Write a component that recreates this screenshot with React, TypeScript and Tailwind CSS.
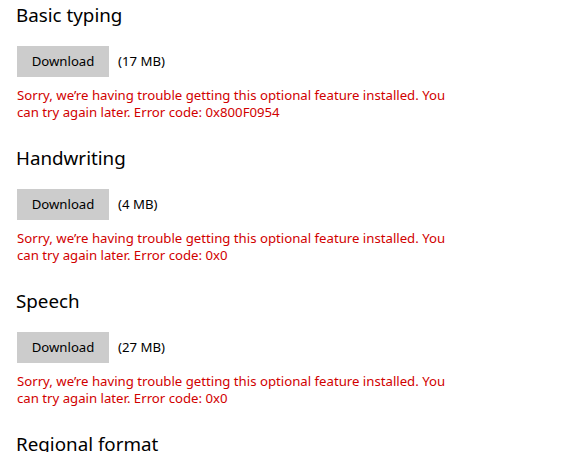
const sections = [
  { title: "Basic typing", size: "(17 MB)", code: "0x800F0954" },
  { title: "Handwriting", size: "(4 MB)", code: "0x0" },
  { title: "Speech", size: "(27 MB)", code: "0x0" },
];

export default function App() {
  return (
    <div className="h-[452px] w-[566px] overflow-hidden bg-white pl-4 font-['Noto_Sans',sans-serif] text-black">
      {sections.map((s) => (
        <div key={s.title} className="h-[143px]">
          <h2 className="pt-[1px] text-[18.8px] leading-[28px]">{s.title}</h2>
          <div className="mt-[17px] flex items-center">
            <button className="ml-[1px] h-[31px] w-[92px] bg-[#cccccc] text-[13.2px]">Download</button>
            <span className="ml-[9px] text-[13.2px]">{s.size}</span>
          </div>
          <p className="mt-[10px] w-[436px] pl-[1px] text-[13.2px] leading-[17px] text-[#d10000]">
            Sorry, we’re having trouble getting this optional feature installed. You can try again later. Error code: {s.code}
          </p>
        </div>
      ))}
      <h2 className="pt-[1px] text-[18.8px] leading-[28px]">Regional format</h2>
    </div>
  );
}
